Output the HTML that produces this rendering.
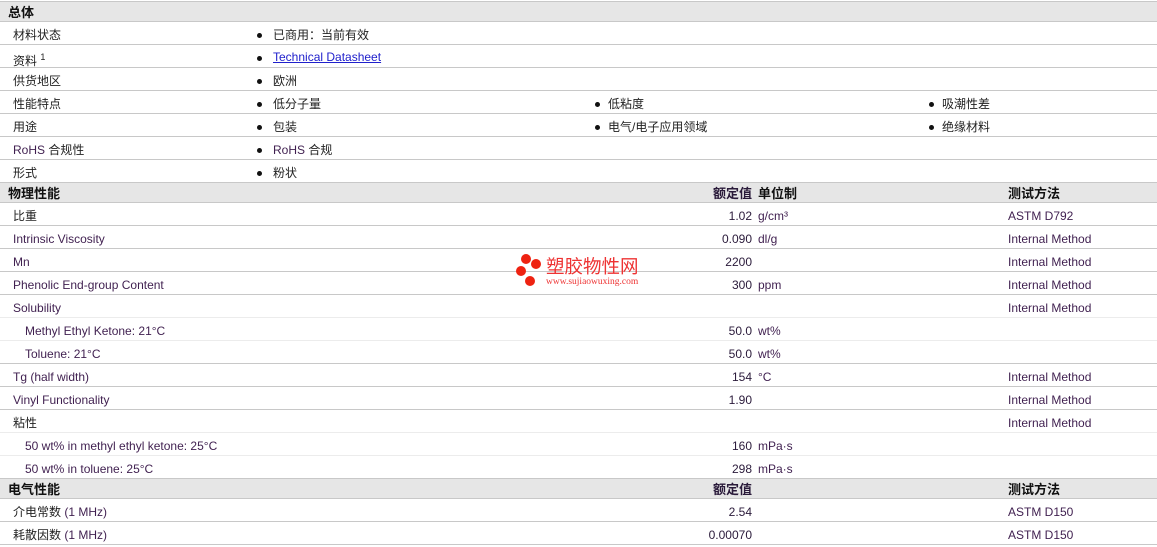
<!DOCTYPE html>
<html><head><meta charset="utf-8"><style>
*{margin:0;padding:0;box-sizing:border-box}
body{width:1157px;height:543px;background:#fff;position:relative;overflow:hidden;font-family:"Liberation Sans","Noto Sans CJK SC",sans-serif;font-size:12px;color:#222}
.r{position:absolute;left:0;width:1157px;border-bottom:1px solid #c8c8c8}
.s{border-bottom-color:#ececec}
.h{background:#e6e6e6;font-weight:bold;font-size:13px;color:#111}
.t{position:absolute;white-space:nowrap;line-height:23px;top:2px}
.h .t{line-height:20px;top:1px}
.p{color:#3f1f4f}
.v{position:absolute;right:405px;text-align:right;line-height:23px;top:2px;color:#2a1a3a}
.h .v{right:405px;line-height:20px;top:1px}
.b{position:absolute;width:5px;height:5px;border-radius:50%;background:#111;top:11px}
a{color:#2020cc;text-decoration:underline}
</style></head><body>
<div style="position:absolute;left:0;top:1px;width:1157px;border-top:1px solid #c8c8c8"></div>
<div class="r h" style="top:2px;height:20px"><div class="t" style="left:8px">总体</div></div>

<div class="r" style="top:22px;height:23px"><div class="t" style="left:13px">材料状态</div><div class="b" style="left:257px"></div><div class="t" style="left:273px">已商用：当前有效</div></div>
<div class="r" style="top:45px;height:23px"><div class="t" style="left:13px;top:1px">资料 <sup style="font-size:9px">1</sup></div><div class="b" style="left:257px;top:11px"></div><div class="t" style="left:273px;top:1px"><a>Technical Datasheet</a></div></div>
<div class="r" style="top:68px;height:23px"><div class="t" style="left:13px">供货地区</div><div class="b" style="left:257px"></div><div class="t" style="left:273px">欧洲</div></div>
<div class="r" style="top:91px;height:23px"><div class="t" style="left:13px">性能特点</div><div class="b" style="left:257px"></div><div class="t" style="left:273px">低分子量</div><div class="b" style="left:595px"></div><div class="t" style="left:608px">低粘度</div><div class="b" style="left:929px"></div><div class="t" style="left:942px">吸潮性差</div></div>
<div class="r" style="top:114px;height:23px"><div class="t" style="left:13px">用途</div><div class="b" style="left:257px"></div><div class="t" style="left:273px">包装</div><div class="b" style="left:595px"></div><div class="t" style="left:608px">电气/电子应用领域</div><div class="b" style="left:929px"></div><div class="t" style="left:942px">绝缘材料</div></div>
<div class="r" style="top:137px;height:23px"><div class="t" style="left:13px"><span class="p">RoHS</span> 合规性</div><div class="b" style="left:257px"></div><div class="t" style="left:273px"><span class="p">RoHS</span> 合规</div></div>
<div class="r" style="top:160px;height:23px"><div class="t" style="left:13px">形式</div><div class="b" style="left:257px"></div><div class="t" style="left:273px">粉状</div></div>

<div class="r h" style="top:183px;height:20px"><div class="t" style="left:8px">物理性能</div><div class="v">额定值</div><div class="t" style="left:758px">单位制</div><div class="t" style="left:1008px">测试方法</div></div>
<div class="r" style="top:203px;height:23px"><div class="t" style="left:13px">比重</div><div class="v">1.02</div><div class="t p" style="left:758px">g/cm³</div><div class="t p" style="left:1008px">ASTM D792</div></div>
<div class="r" style="top:226px;height:23px"><div class="t p" style="left:13px">Intrinsic Viscosity</div><div class="v">0.090</div><div class="t p" style="left:758px">dl/g</div><div class="t p" style="left:1008px">Internal Method</div></div>
<div class="r" style="top:249px;height:23px"><div class="t p" style="left:13px">Mn</div><div class="v">2200</div><div class="t p" style="left:1008px">Internal Method</div></div>
<div class="r" style="top:272px;height:23px"><div class="t p" style="left:13px">Phenolic End-group Content</div><div class="v">300</div><div class="t p" style="left:758px">ppm</div><div class="t p" style="left:1008px">Internal Method</div></div>
<div class="r s" style="top:295px;height:23px"><div class="t p" style="left:13px">Solubility</div><div class="t p" style="left:1008px">Internal Method</div></div>
<div class="r s" style="top:318px;height:23px"><div class="t p" style="left:25px">Methyl Ethyl Ketone: 21°C</div><div class="v">50.0</div><div class="t p" style="left:758px">wt%</div></div>
<div class="r" style="top:341px;height:23px"><div class="t p" style="left:25px">Toluene: 21°C</div><div class="v">50.0</div><div class="t p" style="left:758px">wt%</div></div>
<div class="r" style="top:364px;height:23px"><div class="t p" style="left:13px">Tg (half width)</div><div class="v">154</div><div class="t p" style="left:758px">°C</div><div class="t p" style="left:1008px">Internal Method</div></div>
<div class="r" style="top:387px;height:23px"><div class="t p" style="left:13px">Vinyl Functionality</div><div class="v">1.90</div><div class="t p" style="left:1008px">Internal Method</div></div>
<div class="r s" style="top:410px;height:23px"><div class="t" style="left:13px">粘性</div><div class="t p" style="left:1008px">Internal Method</div></div>
<div class="r s" style="top:433px;height:23px"><div class="t p" style="left:25px">50 wt% in methyl ethyl ketone: 25°C</div><div class="v">160</div><div class="t p" style="left:758px">mPa·s</div></div>
<div class="r" style="top:456px;height:23px"><div class="t p" style="left:25px">50 wt% in toluene: 25°C</div><div class="v">298</div><div class="t p" style="left:758px">mPa·s</div></div>

<div class="r h" style="top:479px;height:20px"><div class="t" style="left:8px">电气性能</div><div class="v">额定值</div><div class="t" style="left:1008px">测试方法</div></div>
<div class="r" style="top:499px;height:23px"><div class="t" style="left:13px">介电常数 <span class="p">(1 MHz)</span></div><div class="v">2.54</div><div class="t p" style="left:1008px">ASTM D150</div></div>
<div class="r" style="top:522px;height:23px"><div class="t" style="left:13px">耗散因数 <span class="p">(1 MHz)</span></div><div class="v">0.00070</div><div class="t p" style="left:1008px">ASTM D150</div></div>

<div style="position:absolute;left:515px;top:254px;width:135px;height:36px">
<div style="position:absolute;left:6px;top:0px;width:10px;height:10px;border-radius:50%;background:#e21"></div>
<div style="position:absolute;left:16px;top:5px;width:10px;height:10px;border-radius:50%;background:#e21"></div>
<div style="position:absolute;left:1px;top:12px;width:10px;height:10px;border-radius:50%;background:#e21"></div>
<div style="position:absolute;left:10px;top:22px;width:10px;height:10px;border-radius:50%;background:#e21"></div>
<div style="position:absolute;left:31px;top:3px;font-size:18.5px;line-height:20px;color:#e33;white-space:nowrap">塑胶物性网</div>
<div style="position:absolute;left:31px;top:23px;font-size:9.5px;line-height:10px;color:#e33;font-family:'Liberation Serif',serif;white-space:nowrap">www.sujiaowuxing.com</div>
</div>
</body></html>
